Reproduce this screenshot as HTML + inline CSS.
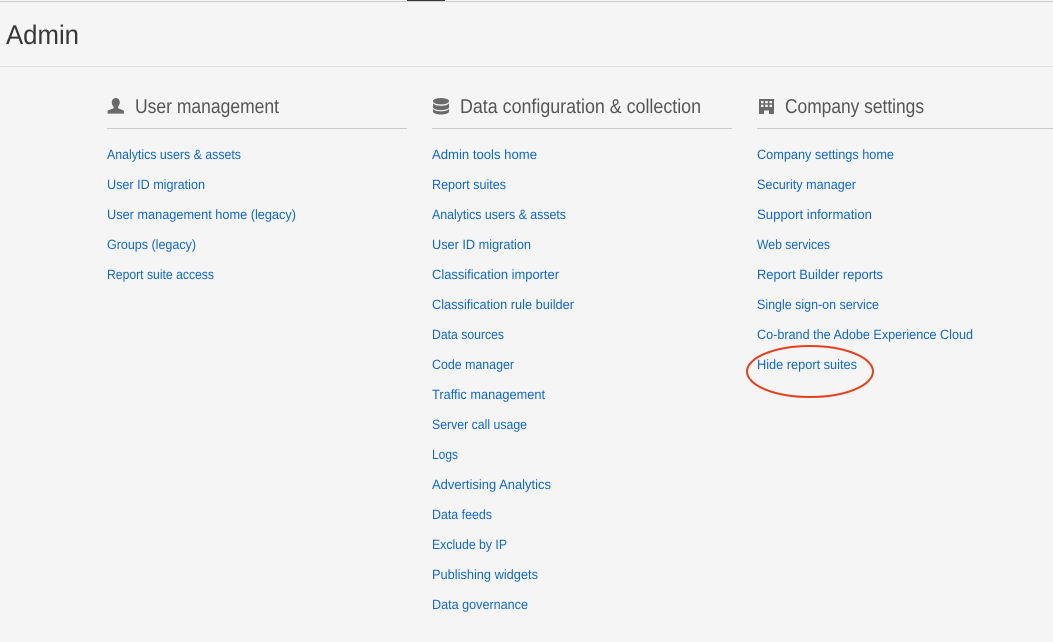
<!DOCTYPE html>
<html lang="en">
<head>
<meta charset="utf-8">
<title>Admin</title>
<style>
html,body{margin:0;padding:0;width:1053px;height:642px;overflow:hidden;background:#f5f5f5}
svg{display:block;font-family:"Liberation Sans",sans-serif;text-rendering:geometricPrecision}
.l{font-size:13.5px;fill:#1168cc}
.h{font-size:20px;fill:#565656}
</style>
</head>
<body>
<svg width="1053" height="642" viewBox="0 0 1053 642" xmlns="http://www.w3.org/2000/svg">
<rect width="1053" height="642" fill="#f5f5f5"/>
<rect x="0" y="1" width="1053" height="1" fill="#cfcfcf"/>
<rect x="407" y="0" width="38" height="1" fill="#3a3a3a"/>
<rect x="0" y="66" width="1053" height="1" fill="#e1e1e1"/>
<text x="6" y="44" font-size="27" fill="#383838" textLength="73" lengthAdjust="spacingAndGlyphs">Admin</text>

<rect x="107" y="128" width="300" height="1" fill="#cacaca"/>
<rect x="432" y="128" width="300" height="1" fill="#cacaca"/>
<rect x="757" y="128" width="296" height="1" fill="#cacaca"/>

<path fill="#6a6a6a" d="M116 98c-2.700 0-4.200 2-4.200 4.400 0 1.800.7 3.300 1.800 4.300v1.500l-4.900 1.900c-.7.300-1.100.8-1.100 1.400v2.100h16.400v-2.100c0-.6-.4-1.100-1.100-1.400l-4.900-1.900v-1.500c1.100-1 1.800-2.500 1.800-4.300 0-2.400-1.500-4.400-3.800-4.400z"/>
<text class="h" x="135" y="113" textLength="144" lengthAdjust="spacingAndGlyphs">User management</text>

<g fill="#6a6a6a">
<ellipse cx="441" cy="101.200" rx="8" ry="3.200"/>
<path d="M433 103.300c1.200 1.700 4.400 2.600 8 2.600s6.800-.9 8-2.600v4c0 1.600-3.600 2.800-8 2.800s-8-1.200-8-2.800z"/>
<path d="M433 108.800c1.200 1.700 4.400 2.600 8 2.600s6.800-.9 8-2.600v2.800c0 1.600-3.600 2.900-8 2.900s-8-1.300-8-2.900z"/>
</g>
<text class="h" x="460" y="113" textLength="241" lengthAdjust="spacingAndGlyphs">Data configuration &amp; collection</text>

<path fill="#6a6a6a" fill-rule="evenodd" d="M759 99h15v15h-5v-3.500h-5v3.500h-5zM761 101v2.200h2.500V101zM765.200 101v2.200h2.600V101zM769.500 101v2.200h2.500V101zM761 104.800V107h2.500v-2.200zM765.200 104.800V107h2.600v-2.200zM769.500 104.800V107h2.500v-2.200z"/>
<text class="h" x="785" y="113" textLength="139" lengthAdjust="spacingAndGlyphs">Company settings</text>

<g class="l">
<text class="l" x="107" y="159" textLength="134" lengthAdjust="spacingAndGlyphs">Analytics users &amp; assets</text>
<text class="l" x="107" y="189" textLength="98" lengthAdjust="spacingAndGlyphs">User ID migration</text>
<text class="l" x="107" y="219" textLength="189" lengthAdjust="spacingAndGlyphs">User management home (legacy)</text>
<text class="l" x="107" y="249" textLength="89" lengthAdjust="spacingAndGlyphs">Groups (legacy)</text>
<text class="l" x="107" y="279" textLength="107" lengthAdjust="spacingAndGlyphs">Report suite access</text>

<text class="l" x="432" y="159" textLength="105" lengthAdjust="spacingAndGlyphs">Admin tools home</text>
<text class="l" x="432" y="189" textLength="74" lengthAdjust="spacingAndGlyphs">Report suites</text>
<text class="l" x="432" y="219" textLength="134" lengthAdjust="spacingAndGlyphs">Analytics users &amp; assets</text>
<text class="l" x="432" y="249" textLength="99" lengthAdjust="spacingAndGlyphs">User ID migration</text>
<text class="l" x="432" y="279" textLength="127" lengthAdjust="spacingAndGlyphs">Classification importer</text>
<text class="l" x="432" y="309" textLength="142" lengthAdjust="spacingAndGlyphs">Classification rule builder</text>
<text class="l" x="432" y="339" textLength="72" lengthAdjust="spacingAndGlyphs">Data sources</text>
<text class="l" x="432" y="369" textLength="82" lengthAdjust="spacingAndGlyphs">Code manager</text>
<text class="l" x="432" y="399" textLength="113" lengthAdjust="spacingAndGlyphs">Traffic management</text>
<text class="l" x="432" y="429" textLength="95" lengthAdjust="spacingAndGlyphs">Server call usage</text>
<text class="l" x="432" y="459" textLength="26" lengthAdjust="spacingAndGlyphs">Logs</text>
<text class="l" x="432" y="489" textLength="119" lengthAdjust="spacingAndGlyphs">Advertising Analytics</text>
<text class="l" x="432" y="519" textLength="60" lengthAdjust="spacingAndGlyphs">Data feeds</text>
<text class="l" x="432" y="549" textLength="75" lengthAdjust="spacingAndGlyphs">Exclude by IP</text>
<text class="l" x="432" y="579" textLength="106" lengthAdjust="spacingAndGlyphs">Publishing widgets</text>
<text class="l" x="432" y="609" textLength="96" lengthAdjust="spacingAndGlyphs">Data governance</text>

<text class="l" x="757" y="159" textLength="137" lengthAdjust="spacingAndGlyphs">Company settings home</text>
<text class="l" x="757" y="189" textLength="99" lengthAdjust="spacingAndGlyphs">Security manager</text>
<text class="l" x="757" y="219" textLength="115" lengthAdjust="spacingAndGlyphs">Support information</text>
<text class="l" x="757" y="249" textLength="73" lengthAdjust="spacingAndGlyphs">Web services</text>
<text class="l" x="757" y="279" textLength="126" lengthAdjust="spacingAndGlyphs">Report Builder reports</text>
<text class="l" x="757" y="309" textLength="122" lengthAdjust="spacingAndGlyphs">Single sign-on service</text>
<text class="l" x="757" y="339" textLength="216" lengthAdjust="spacingAndGlyphs">Co-brand the Adobe Experience Cloud</text>
<text class="l" x="757" y="369" textLength="100" lengthAdjust="spacingAndGlyphs">Hide report suites</text>
</g>

<ellipse cx="810" cy="371.500" rx="63" ry="25.500" fill="none" stroke="#e5411e" stroke-width="2"/>
</svg>
</body>
</html>
